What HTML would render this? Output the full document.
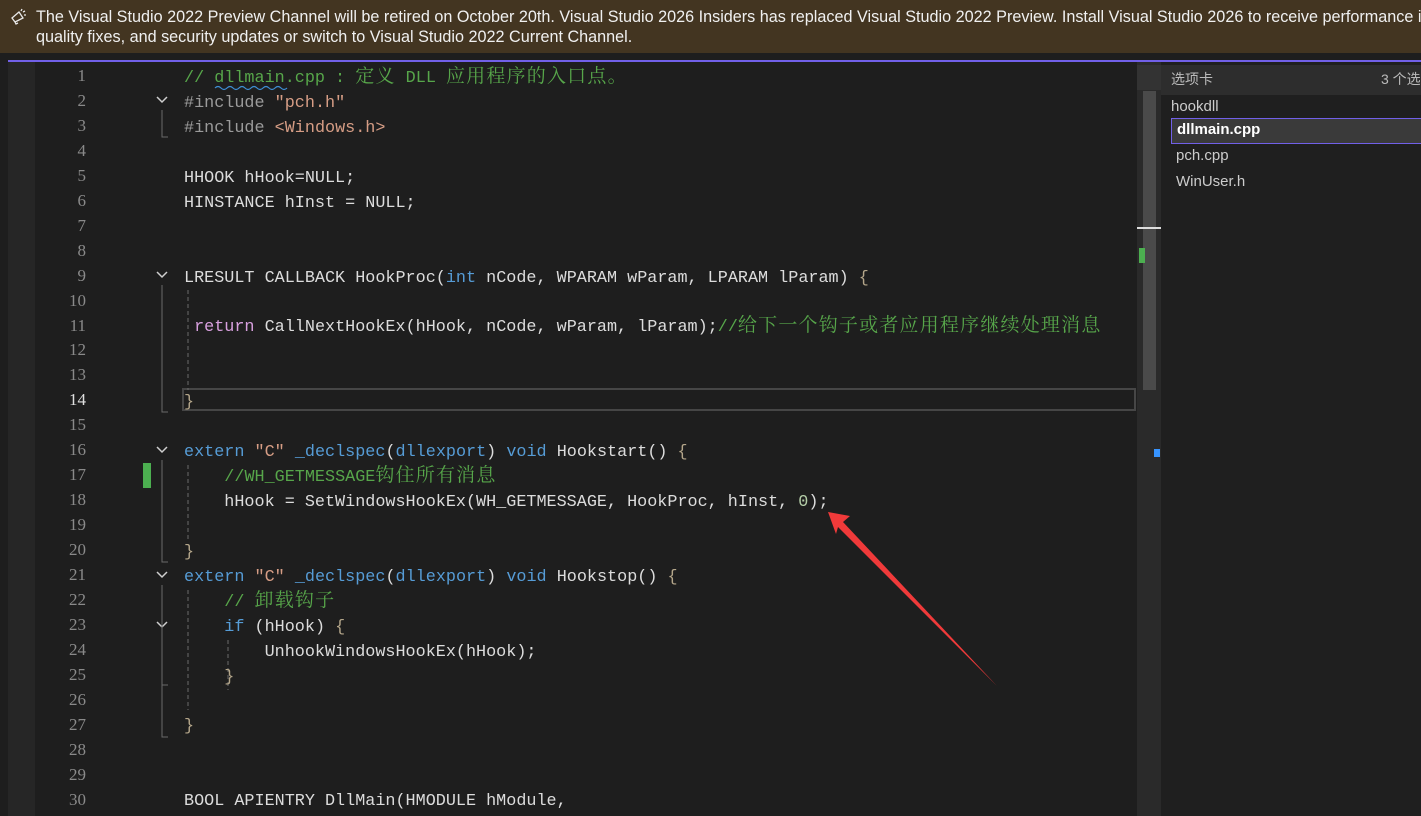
<!DOCTYPE html>
<html><head><meta charset="utf-8"><style>
*{margin:0;padding:0;box-sizing:border-box}
body{width:1421px;height:816px;background:#1e1e1e;overflow:hidden;position:relative;font-family:"Liberation Sans","Noto Sans CJK SC",sans-serif}
.banner{position:absolute;left:0;top:0;width:1421px;height:53px;background:#433521;color:#f0f0f0;font-size:16.2px;line-height:20px;padding:7px 0 0 36px;white-space:nowrap}
.purple{position:absolute;left:8px;top:60px;width:1413px;height:2px;background:#7160e8}
.gut{position:absolute;left:8px;top:62px;width:27px;height:754px;background:#262626}
.ln{position:absolute;left:40px;width:46px;text-align:right;font:17px/24.95px "Liberation Serif","Noto Serif CJK SC",serif;color:#8a8a8a}
.code{position:absolute;left:184px;font:16.8px "Liberation Mono","Noto Serif CJK SC",monospace;color:#dcdcdc}
.code div{height:24.95px;line-height:24.95px;white-space:pre;overflow:visible}
.z{font-size:19px;letter-spacing:1.2px;line-height:10px}
.k{color:#569cd6}.s{color:#d69d85}.c{color:#57a64a}.p{color:#9b9b9b}.r{color:#d8a0df}.n{color:#b5cea8}.b{color:#b4a68a}
.panel{position:absolute;left:1161px;top:62px;width:260px;height:754px;background:#1f1f1f}
</style></head><body>
<div class="banner">The Visual Studio 2022 Preview Channel will be retired on October 20th. Visual Studio 2026 Insiders has replaced Visual Studio 2022 Preview. Install Visual Studio 2026 to receive performance i<br>quality fixes, and security updates or switch to Visual Studio 2022 Current Channel.</div>
<svg style="position:absolute;left:9px;top:6px" width="20" height="20" viewBox="0 0 20 20" fill="none" stroke="#e8e8e8" stroke-width="1.3"><path d="M3 12 L10 6 L14 12 L6 16 Z M6 16 L7 18 L9 17"/><path d="M13 3 L12 5 M16 5 L14 6 M17 9 L15 9"/></svg>
<div class="purple"></div>
<div class="gut"></div>
<div style="position:absolute;top:388px;height:23px;border:2px solid #464646;left:182px;width:954px"></div>
<div style="position:absolute;left:1137px;top:62px;width:24px;height:754px;background:#2a2a2a"></div>
<div style="position:absolute;left:1137px;top:65px;width:24px;height:25px;background:#333"></div>
<div style="position:absolute;left:1143px;top:91px;width:13px;height:299px;background:#4a4a4a"></div>
<div style="position:absolute;left:1137px;top:227px;width:24px;height:2px;background:#ddd"></div>
<div style="position:absolute;left:1139px;top:248px;width:6px;height:15px;background:#4caf50"></div>
<div style="position:absolute;left:1154px;top:449px;width:6px;height:8px;background:#3794ff"></div>
<div style="position:absolute;left:143px;top:463px;width:8px;height:25px;background:#4caf50"></div>
<div class="panel">
<div style="position:absolute;left:0;top:3px;width:260px;height:30px;background:#2d2d2d"></div>
<div style="position:absolute;left:10px;top:7px;color:#bbb;font-size:14px">选项卡</div>
<div style="position:absolute;left:220px;top:7px;color:#bbb;font-size:14px;white-space:nowrap">3 个选</div>
<div style="position:absolute;left:10px;top:36px;color:#ccc;font-size:15px">hookdll</div>
<div style="position:absolute;left:10px;top:56px;width:260px;height:26px;background:#3a3a3a;border:1px solid #7160e8"></div>
<div style="position:absolute;left:16px;top:59px;color:#fff;font-size:15px;font-weight:bold">dllmain.cpp</div>
<div style="position:absolute;left:15px;top:85px;color:#ccc;font-size:15px">pch.cpp</div>
<div style="position:absolute;left:15px;top:111px;color:#ccc;font-size:15px">WinUser.h</div>
</div>

<div class="ln" style="top:64px">1<br>2<br>3<br>4<br>5<br>6<br>7<br>8<br>9<br>10<br>11<br>12<br>13<br><span style="color:#e0e0e0">14</span><br>15<br>16<br>17<br>18<br>19<br>20<br>21<br>22<br>23<br>24<br>25<br>26<br>27<br>28<br>29<br>30</div>

<svg style="position:absolute;left:0;top:0" width="1421" height="816">
<g fill="none" stroke="#cfcfcf" stroke-width="1.5">
<path d="M157 97l5 5 5-5M157 272l5 5 5-5M157 447l5 5 5-5M157 572l5 5 5-5M157 622l5 5 5-5"/>
</g>
<g stroke="#6a6a6a" stroke-width="1" fill="none">
<path d="M162 110V137h6M162 285V412h6M162 460V562h6M162 585V737h6M162 685h6"/>
<path d="M188 290V390M188 465V540M188 590V710M228 640V690" stroke-dasharray="4 3"/>
</g>
<path d="M75 88 q3 -3 6 0 t6 0 t6 0 t6 0 t6 0 t6 0 t6 0 t6 0 t6 0 t6 0 t6 0 t6 0" transform="translate(140,0)" fill="none" stroke="#3f8fd6" stroke-width="1.2"/>
<polygon points="828,512 850,516 843,522 997,686 838,527 836,534" fill="#f03a3a"/>
</svg>

<div class="code" style="top:67px">
<div><span class="c">// dllmain.cpp : <span class="z">定义</span> DLL <span class="z">应用程序的入口点。</span></span></div>
<div><span class="p">#include</span> <span class="s">"pch.h"</span></div>
<div><span class="p">#include</span> <span class="s">&lt;Windows.h&gt;</span></div>
<div></div>
<div>HHOOK hHook=NULL;</div>
<div>HINSTANCE hInst = NULL;</div>
<div></div>
<div></div>
<div>LRESULT CALLBACK HookProc(<span class="k">int</span> nCode, WPARAM wParam, LPARAM lParam) <span class="b">{</span></div>
<div></div>
<div> <span class="r">return</span> CallNextHookEx(hHook, nCode, wParam, lParam);<span class="c">//<span class="z">给下一个钩子或者应用程序继续处理消息</span></span></div>
<div></div>
<div></div>
<div><span class="b">}</span></div>
<div></div>
<div><span class="k">extern</span> <span class="s">"C"</span> <span class="k">_declspec</span>(<span class="k">dllexport</span>) <span class="k">void</span> Hookstart() <span class="b">{</span></div>
<div>    <span class="c">//WH_GETMESSAGE<span class="z">钩住所有消息</span></span></div>
<div>    hHook = SetWindowsHookEx(WH_GETMESSAGE, HookProc, hInst, <span class="n">0</span>);</div>
<div></div>
<div><span class="b">}</span></div>
<div><span class="k">extern</span> <span class="s">"C"</span> <span class="k">_declspec</span>(<span class="k">dllexport</span>) <span class="k">void</span> Hookstop() <span class="b">{</span></div>
<div>    <span class="c">// <span class="z">卸载钩子</span></span></div>
<div>    <span class="k">if</span> (hHook) <span class="b">{</span></div>
<div>        UnhookWindowsHookEx(hHook);</div>
<div>    <span class="b">}</span></div>
<div></div>
<div><span class="b">}</span></div>
<div></div>
<div></div>
<div>BOOL APIENTRY DllMain(HMODULE hModule,</div>
</div>
</body></html>
